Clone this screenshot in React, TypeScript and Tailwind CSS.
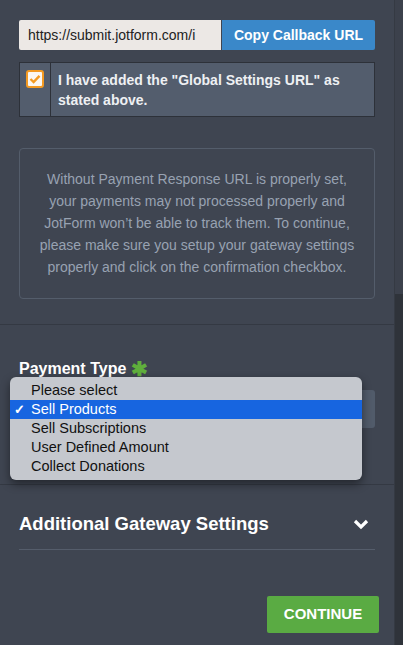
import React from "react";

const options = ["Please select", "Sell Products", "Sell Subscriptions", "User Defined Amount", "Collect Donations"];

function PaymentDropdown() {
  // native select popup, opened over the field
  return (
    <div className="absolute left-[-9px] top-[-13px] w-[352px] rounded-[6px] bg-[#c5c8ce] py-[4px] shadow-[0_4px_10px_rgba(0,0,0,0.45)] z-10">
      {options.map((opt) => {
        const sel = opt === "Sell Products";
        return (
          <div
            key={opt}
            className={`relative h-[19px] pl-[21px] text-[14.5px] leading-[19px] ${sel ? "bg-[#1765e0] text-white" : "text-[#111]"}`}
          >
            {sel && <span className="absolute left-[4px] top-0 text-[13px] font-bold">✓</span>}
            {opt}
          </div>
        );
      })}
    </div>
  );
}

export default function App() {
  return (
    <div className="flex w-[403px] h-[645px] overflow-hidden bg-[#3f4551] font-['Liberation_Sans',Arial,sans-serif]">
      <div className="w-[394px] shrink-0 flex flex-col">
        <div className="px-[19px] pt-[20px]">
          {/* callback url */}
          <div className="flex h-[30px]">
            <div className="w-[202px] shrink-0 bg-[#ece8e5] rounded-l-[2px] pl-[9px] text-[14px] leading-[30px] text-[#222] overflow-hidden whitespace-nowrap">
              https://submit.jotform.com/i
            </div>
            <button className="flex-1 ml-px bg-[#3a88c9] rounded-r-[2px] text-white text-[14px] font-bold">
              Copy Callback URL
            </button>
          </div>

          {/* confirmation */}
          <div className="mt-[12px] flex h-[55px] bg-[#535d6d] border border-[#2d3139]">
            <div className="w-[31px] shrink-0 border-r border-[#2d3139] flex justify-center pt-[7px]">
              <div className="w-[18px] h-[18px] rounded-[3px] border-2 border-[#f39a22] bg-[#fbf7f2] flex items-center justify-center">
                <svg width="12" height="10" viewBox="0 0 12 10">
                  <polyline points="1.5,5 4.6,8 10.5,1.8" fill="none" stroke="#f39a22" strokeWidth="2.4" />
                </svg>
              </div>
            </div>
            <div className="pl-[7px] pt-[7px] text-[14px] leading-[20px] font-bold text-[#eef0f3]">
              I have added the "Global Settings URL" as stated above.
            </div>
          </div>

          {/* notice */}
          <div className="mt-[31px] h-[151px] rounded-[4px] border border-[#545d6b] flex items-center justify-center pb-[2px]">
            <p className="text-center text-[14px] leading-[22px] text-[#98a2b2] whitespace-nowrap">
              Without Payment Response URL is properly set,
              <br />
              your payments may not processed properly and
              <br />
              JotForm won’t be able to track them. To continue,
              <br />
              please make sure you setup your gateway settings
              <br />
              properly and click on the confirmation checkbox.
            </p>
          </div>
        </div>

        <div className="mt-[25px] border-t border-[#343943]" />

        {/* payment type */}
        <div className="px-[19px] pt-[35px]">
          <div className="h-[18px] text-[16px] leading-[18px] font-bold text-white">
            Payment Type{" "}
            <span className="inline-block align-top text-[#5fae3c] text-[20px] leading-[18px]">✱</span>
          </div>
          <div className="relative mt-[12px]">
            <div className="h-[38px] rounded-[3px] bg-[#515b6a]" />
            <PaymentDropdown />
          </div>
        </div>

        <div className="mt-[56px] border-t border-[#343943]" />

        {/* additional settings */}
        <div className="mx-[19px] pt-[27px] pb-[13px] flex items-center justify-between border-b border-[#555d6b]">
          <span className="text-[18.5px] leading-[24px] font-bold text-white">Additional Gateway Settings</span>
          <svg width="16" height="12" viewBox="0 0 16 12" className="mr-[6px]">
            <polyline points="2,3 8,9 14,3" fill="none" stroke="#fff" strokeWidth="3.2" />
          </svg>
        </div>

        <div className="flex justify-end pr-[15px] mt-[46px]">
          <button className="w-[112px] h-[37px] rounded-[2px] bg-[#5aab43] text-white text-[15px] font-bold">
            CONTINUE
          </button>
        </div>
      </div>

      {/* scrollbar gutter */}
      <div className="flex-1 flex flex-col border-l border-[#353a43]">
        <div className="h-[294px] bg-[#3c414c]" />
        <div className="flex-1 bg-[#2f333a]" />
      </div>
    </div>
  );
}
